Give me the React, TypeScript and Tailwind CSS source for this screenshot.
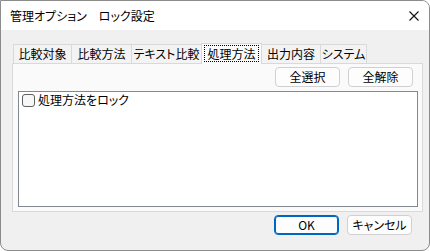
import { useState } from 'react';

const TABS = [
  { label: '比較対象', w: 'w-[59px]' },
  { label: '比較方法', w: 'w-[61px]' },
  { label: 'テキスト比較', w: 'w-[71px]' },
  { label: '処理方法', w: 'w-[61px]' },
  { label: '出力内容', w: 'w-[60px]' },
  { label: 'システム', w: 'w-[47px]' },
];

function WinButton({ label, primary }: { label: string; primary?: boolean }) {
  return (
    <button
      className={`w-[65px] h-[20px] rounded-[4px] bg-[#fdfdfd] text-[12px] leading-none text-black flex items-center justify-center ${
        primary ? 'border border-[#0067c0] shadow-[inset_0_0_0_1px_#0067c0]' : 'border border-[#d0d0d0]'
      }`}
    >
      {label}
    </button>
  );
}

export default function App() {
  const [active] = useState(3);
  const [locked, setLocked] = useState(false);

  return (
    <div className="w-[430px] h-[251px] bg-[#f0f0f0] border border-[#8c8c8c] rounded-tr-[8px] rounded-b-[8px] overflow-hidden flex flex-col font-['Noto_Sans_CJK_JP',sans-serif] [font-feature-settings:'palt'] text-black select-none">
      {/* Title bar */}
      <div className="h-[29px] bg-white flex items-center justify-between pl-[9px] pr-[10px]">
        <span className="text-[12px] leading-none">管理オプション　ロック設定</span>
        <svg width="10" height="10" viewBox="0 0 10 10">
          <path d="M0.5 0.5L9.5 9.5M9.5 0.5L0.5 9.5" stroke="#111" strokeWidth="1.1" />
        </svg>
      </div>

      <div className="flex-1 flex flex-col pt-[12px] pl-[11px] pr-[6px]">
        {/* Tabs */}
        <div className="h-[21px] flex items-end pl-[1px] relative z-10">
          {TABS.map((t, i) =>
            i === active ? (
              <div
                key={t.label}
                className={`${t.w} h-[21px] -mb-[1px] -ml-[1px] bg-[#fafafa] border border-b-0 border-[#d9d9d9] flex items-start justify-center pt-[1px] px-[2px]`}
              >
                <span className="w-full text-center text-[12px] leading-[15px] border border-dotted border-black whitespace-nowrap">
                  {t.label}
                </span>
              </div>
            ) : (
              <div
                key={t.label}
                className={`${t.w} h-[19px] bg-[#f3f3f3] border border-b-0 border-[#d9d9d9] -ml-[1px] first:ml-0 flex items-center justify-center text-[12px] leading-none whitespace-nowrap`}
              >
                {t.label}
              </div>
            )
          )}
        </div>

        {/* Panel */}
        <div className="h-[149px] bg-[#fafafa] border border-[#d9d9d9] flex flex-col pl-[5px] pr-[4px] pt-[3px] pb-[4px]">
          <div className="flex justify-end gap-[8px] pr-[5px]">
            <WinButton label="全選択" />
            <WinButton label="全解除" />
          </div>
          <div className="mt-[4px] flex-1 bg-white border border-[#828790] px-[3px] pt-[1px]">
            <label className="flex items-center gap-[3px] text-[12px] leading-none h-[14px]" onClick={() => setLocked(!locked)}>
              <span className="w-[13px] h-[13px] rounded-[3px] border border-[#5f5f5f] bg-[#f7f7f7] flex items-center justify-center">
                {locked && (
                  <svg width="9" height="9" viewBox="0 0 9 9">
                    <path d="M1 4.5L3.5 7L8 1.5" stroke="#000" strokeWidth="1.2" fill="none" />
                  </svg>
                )}
              </span>
              処理方法をロック
            </label>
          </div>
        </div>

        {/* Footer buttons */}
        <div className="flex justify-end gap-[8px] mt-[3px] pr-[11px]">
          <WinButton label="OK" primary />
          <WinButton label="キャンセル" />
        </div>
      </div>
    </div>
  );
}
